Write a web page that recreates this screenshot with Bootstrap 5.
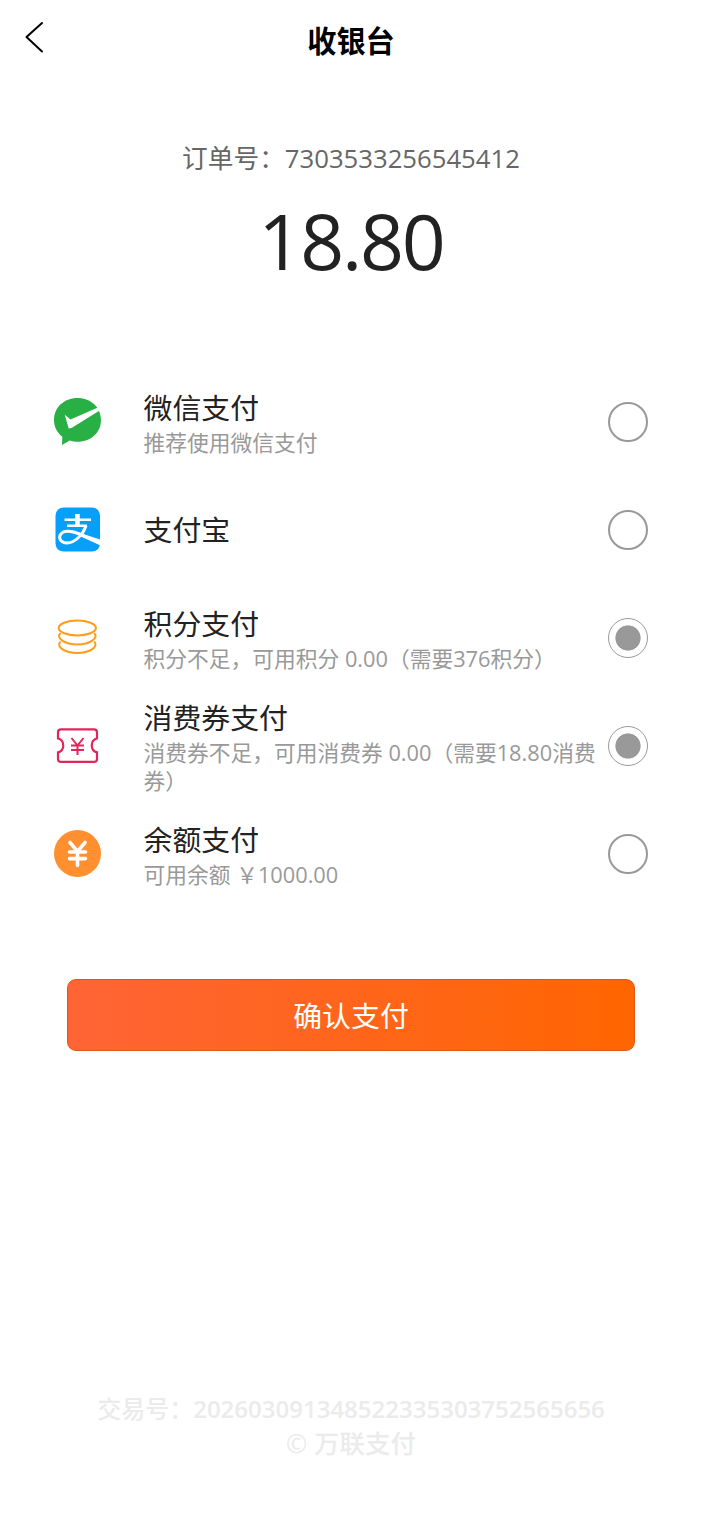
<!DOCTYPE html>
<html lang="zh-CN">
<head>
<meta charset="utf-8">
<meta name="viewport" content="width=device-width, initial-scale=1">
<title>收银台</title>
<link href="https://cdn.jsdelivr.net/npm/bootstrap@5.3.0/dist/css/bootstrap.min.css" rel="stylesheet">
<style>
  body { font-family: "Open Sans", "Noto Sans CJK SC", sans-serif; color: #222; background: #fff; min-height: 1520px; }
  .topbar { height: 80px; }
  .topbar h1 { font: 700 29.2px/79px "Noto Sans CJK SC", sans-serif; color: #000; }
  .back-btn { left: 24px; top: 20px; line-height: 0; }
  .order-no { margin-top: 59px; font-size: 25.7px; line-height: 40px; color: #666; }
  .amount { font-size: 77px; line-height: 100px; margin-top: 12px; letter-spacing: -2.2px; }
  .pay-list { margin-top: 77px; padding: 0 53px; }
  .pay-item { height: 108px; }
  .pay-icon { width: 49px; height: 49px; margin: -2px 41.500px 0 0; }
  .pay-text { width: 455px; }
  .pay-name { font-size: 28.9px; line-height: 42px; }
  .pay-hint { font-size: 21.75px; line-height: 28px; color: #999; }
  .pay-radio { appearance: none; width: 40px; height: 40px; margin: 0 0 0 9.5px; border: 2.5px solid #999; border-radius: 50%; background: #fff; }
  .pay-radio:checked { border-width: 1.5px; background: radial-gradient(circle, #999 12.2px, #fff 13px); }
  .pay-btn { height: 72px; margin: 71px 67px 0; border: 1px solid #df5715; border-radius: 9px; background: linear-gradient(90deg, #ff6436, #ff6600); color: #fff; font-size: 28.9px; padding: 2px 0 0; }
  .page-foot { margin-top: 340px; font-size: 24px; line-height: 35px; color: #ebebeb; font-weight: 500; }
  .page-foot .digits { font-weight: 600; }
  .brand { font-size: 25.5px; line-height: 34px; }
</style>
</head>
<body>
<header class="topbar position-relative text-center">
  <a href="#" class="back-btn position-absolute" aria-label="返回"><svg width="22" height="34" viewBox="0 0 22 34" fill="none" stroke="#000" stroke-width="2" stroke-linecap="round" stroke-linejoin="round"><path d="M18 3 2.500 17 18 31.500"/></svg></a>
  <h1 class="m-0">收银台</h1>
</header>
<main class="d-flex flex-column">
  <div class="order-no text-center">订单号：7303533256545412</div>
  <div class="amount text-center">18.80</div>
  <div class="pay-list">
    <label class="pay-item d-flex align-items-center">
      <svg class="pay-icon flex-shrink-0" viewBox="0 0 49 49"><path fill="#28b045" d="M24.500 1C11 1 1 10.500 1 23c0 7 3.200 12.500 8.300 16.800L9 48l7.800-4.400c2.400.8 5 1.200 7.700 1.200C38 44.800 48 35.500 48 23S38 1 24.500 1z"/><path fill="#fff" d="M11.800 17.800 17.500 22.500 45.500 10.200 47.500 13 18.500 31 15.700 31.500z"/></svg>
      <span class="pay-text"><span class="pay-name d-block">微信支付</span><span class="pay-hint d-block">推荐使用微信支付</span></span>
      <input class="pay-radio" type="radio" name="w">
    </label>
    <label class="pay-item d-flex align-items-center">
      <svg class="pay-icon flex-shrink-0" viewBox="0 0 49 49"><rect x="2.500" y="2.500" width="44.500" height="44" rx="8" fill="#06a0fb"/><g fill="none" stroke="#fff"><path stroke-width="4.500" d="M24.500 9v11"/><path stroke-width="2.400" d="M11.500 14.800H38M14 20.800h20"/><path stroke-width="3" d="M33 20.500C30 30 21 38.500 13.500 38 6 37.500 4.500 30.500 10 27.200 17 24 27 29.500 34 32"/><path stroke="none" fill="#fff" d="M28 28.300 47 34.500V40.200L25.500 30.500z"/></g></svg>
      <span class="pay-text"><span class="pay-name d-block">支付宝</span></span>
      <input class="pay-radio" type="radio" name="a">
    </label>
    <label class="pay-item d-flex align-items-center">
      <svg class="pay-icon flex-shrink-0" viewBox="0 0 49 49" fill="none" stroke="#ff9c1a" stroke-width="2"><ellipse cx="24.300" cy="15" rx="18.600" ry="7.400"/><path d="M7.500 20c-5 5 4 11.500 16.800 11.500S46 25 41.200 20M7.500 28.500c-5 5 4 11.500 16.800 11.500s21.700-6.500 16.900-11.500"/></svg>
      <span class="pay-text"><span class="pay-name d-block">积分支付</span><span class="pay-hint d-block">积分不足，可用积分 0.00（需要376积分）</span></span>
      <input class="pay-radio" type="radio" name="p" checked>
    </label>
    <label class="pay-item d-flex align-items-center">
      <svg class="pay-icon flex-shrink-0" viewBox="0 0 49 49" fill="none" stroke="#e4255c" stroke-width="2.200"><path d="M8 8.400h33a3 3 0 0 1 3 3v6c-7 2-7 12 0 14v6.500a3 3 0 0 1-3 3H8a3 3 0 0 1-3-3v-6.500c7-2 7-12 0-14v-6a3 3 0 0 1 3-3z"/><path stroke-width="2" d="m18.500 17 6 7.500 6-7.500M18 24.500h13M18 29h13M24.500 24.500v9.500"/></svg>
      <span class="pay-text"><span class="pay-name d-block">消费券支付</span><span class="pay-hint d-block">消费券不足，可用消费券 0.00（需要18.80消费券）</span></span>
      <input class="pay-radio" type="radio" name="c" checked>
    </label>
    <label class="pay-item d-flex align-items-center">
      <svg class="pay-icon flex-shrink-0" viewBox="0 0 49 49"><circle cx="24.500" cy="24.500" r="23.500" fill="#ff8f2f"/><path fill="none" stroke="#fff" stroke-width="3.600" stroke-linecap="round" stroke-linejoin="round" d="m17 13.500 7.500 9 7.500-9M16.500 23h16M16.500 29.600h16M24.500 22.500v14"/></svg>
      <span class="pay-text"><span class="pay-name d-block">余额支付</span><span class="pay-hint d-block">可用余额 ￥1000.00</span></span>
      <input class="pay-radio" type="radio" name="b">
    </label>
  </div>
  <button class="btn pay-btn" type="button">确认支付</button>
</main>
<footer class="page-foot text-center">
  <div>交易号：<span class="digits">202603091348522335303752565656</span></div>
  <div class="brand">© 万联支付</div>
</footer>
<script src="https://cdn.jsdelivr.net/npm/bootstrap@5.3.0/dist/js/bootstrap.bundle.min.js"></script>
</body>
</html>
